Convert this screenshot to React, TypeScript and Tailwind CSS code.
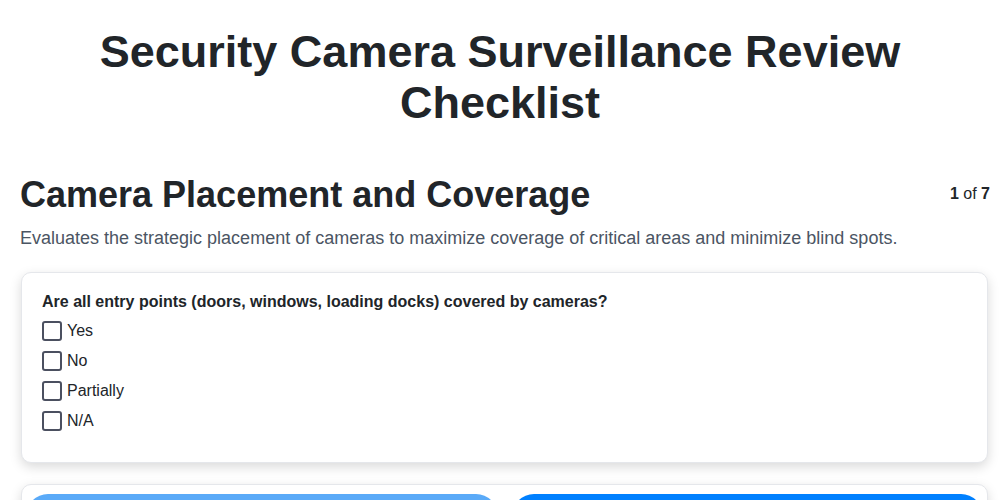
import React, { useState } from 'react';

const options = ['Yes', 'No', 'Partially', 'N/A'];

export default function App() {
  const [checked, setChecked] = useState<string[]>([]);

  const toggle = (o: string) => {
    setChecked(prev => (prev.includes(o) ? prev.filter(x => x !== o) : [...prev, o]));
  };

  return (
    <div className="min-h-screen bg-white text-[#212529] font-['Liberation_Sans',Arial,sans-serif]">
      {/* Title */}
      <h1 className="text-center font-bold text-[45px] leading-[51px] pt-[26px] px-[80px]">
        Security Camera Surveillance Review Checklist
      </h1>

      <div className="pl-[20px] pr-[10px] mt-[46px]">
        {/* Section header */}
        <div className="flex items-start justify-between">
          <h2 className="text-[36px] leading-[42px] font-bold">Camera Placement and Coverage</h2>
          <div className="text-base mt-[8px]">
            <span className="font-bold">1</span> of <span className="font-bold">7</span>
          </div>
        </div>
        <p className="text-lg text-[#4b5563] mt-[8px]">
          Evaluates the strategic placement of cameras to maximize coverage of critical areas and minimize blind spots.
        </p>

        {/* Question card */}
        <div className="mt-[20px] ml-px mr-[2px] bg-white border border-[#e5e7eb] rounded-[10px] shadow-[0_4px_12px_rgba(0,0,0,0.15)] px-[20px] pt-[20px] pb-[31px]">
          <div className="font-bold text-base leading-[18px]">
            Are all entry points (doors, windows, loading docks) covered by cameras?
          </div>
          <div className="mt-[10px] flex flex-col gap-[10px]">
            {options.map(o => (
              <label key={o} className="flex items-center gap-[5px] cursor-pointer leading-[20px] h-[20px]">
                <span
                  onClick={() => toggle(o)}
                  className={`w-[20px] h-[20px] rounded-[3px] border-2 flex items-center justify-center ${
                    checked.includes(o) ? 'bg-[#0d6efd] border-[#0d6efd]' : 'bg-white border-[#4b5060]'
                  }`}
                >
                  {checked.includes(o) && (
                    <svg width="12" height="12" viewBox="0 0 12 12" fill="none" stroke="white" strokeWidth="2">
                      <path d="M2 6l3 3 5-6" />
                    </svg>
                  )}
                </span>
                <span className="text-base leading-[20px]">{o}</span>
              </label>
            ))}
          </div>
        </div>

        {/* Navigation card */}
        <div className="mt-[21px] ml-px mr-[2px] bg-white border border-[#e5e7eb] rounded-[10px] shadow-[0_4px_12px_rgba(0,0,0,0.15)] px-[4px] pt-[9px] pb-[10px] flex gap-[14px]">
          <button className="flex-1 h-[64px] rounded-[22px] bg-[#5aaaf8] text-white font-bold pt-[36px]">Previous</button>
          <button className="flex-1 h-[64px] rounded-[22px] bg-[#0080ff] text-white font-bold pt-[36px]">Next</button>
        </div>
      </div>
    </div>
  );
}
